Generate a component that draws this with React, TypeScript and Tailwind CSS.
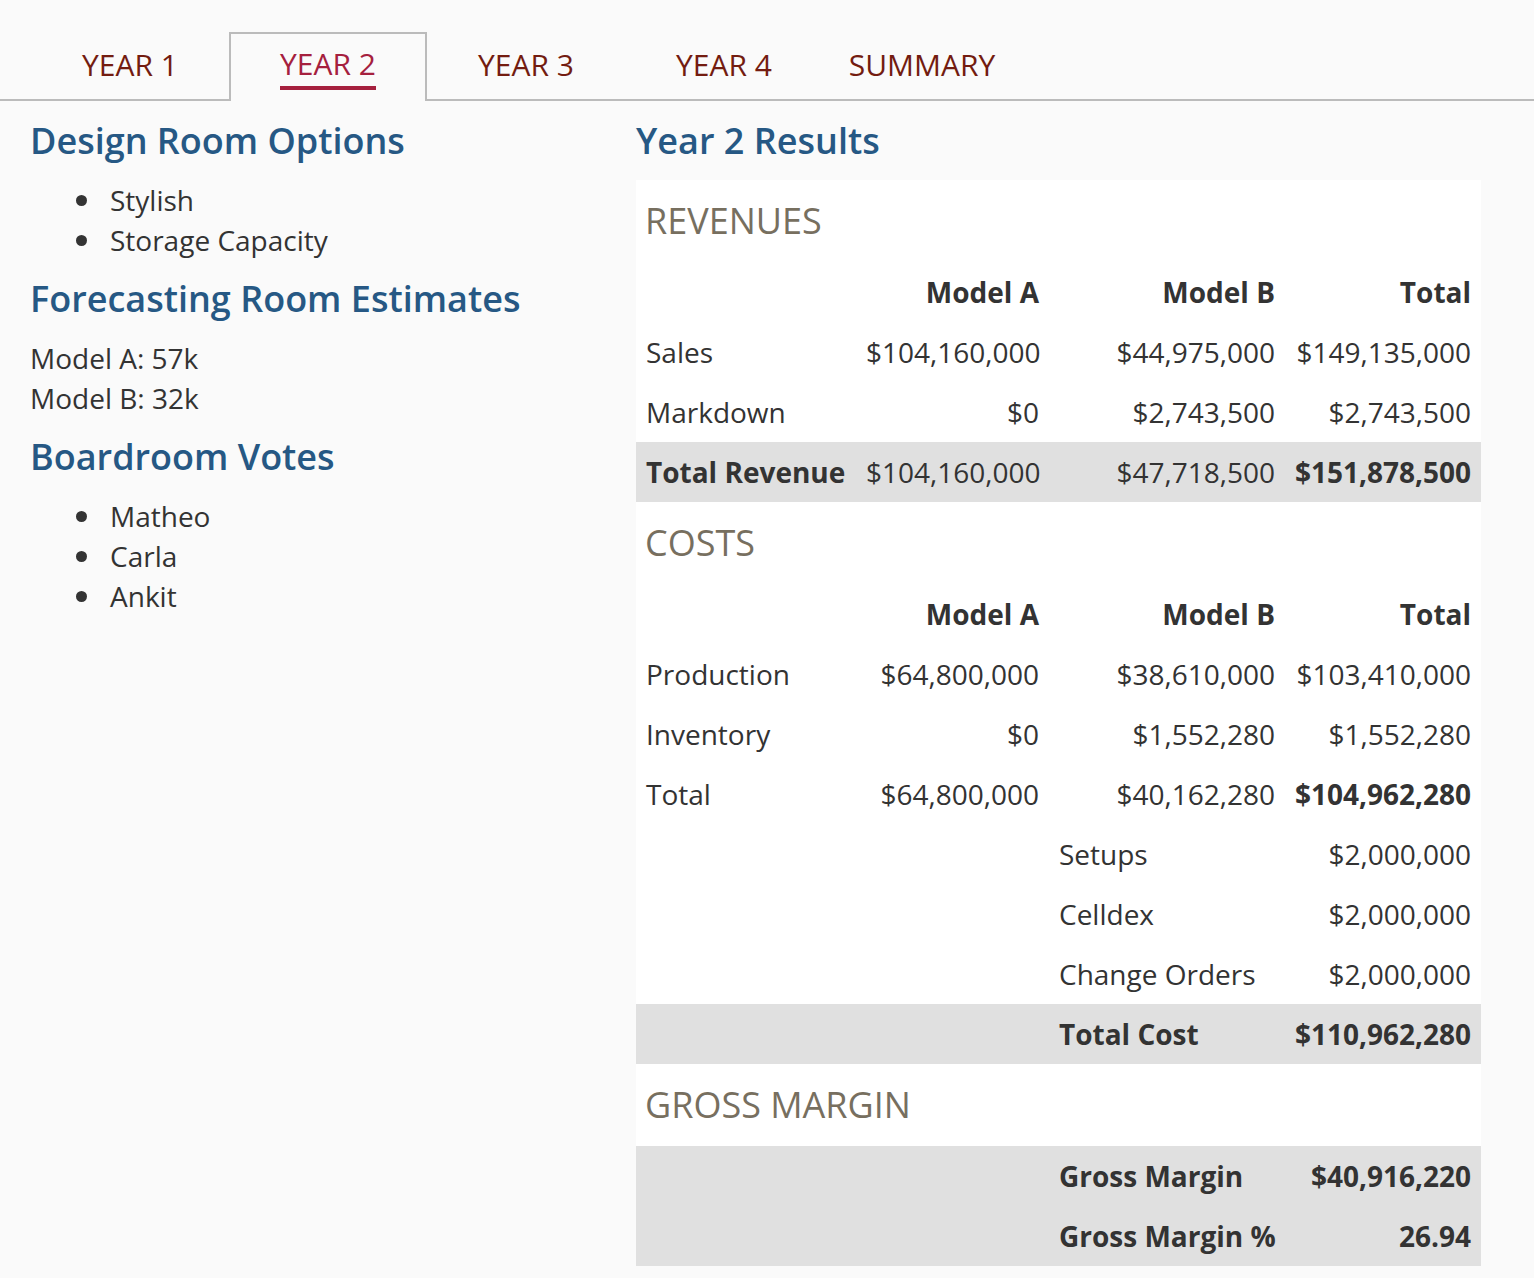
import React from "react";

const tabs = ["YEAR 1", "YEAR 2", "YEAR 3", "YEAR 4", "SUMMARY"];

type Cell = { t?: string; b?: boolean; left?: boolean };
type Row = { cells: Cell[]; gray?: boolean };

function TRow({ row }: { row: Row }) {
  return (
    <div
      className={`grid grid-cols-[220px_193px_236px_196px] h-[60px] items-center ${
        row.gray ? "bg-[#e0e0e0]" : ""
      }`}
    >
      {row.cells.map((c, i) => (
        <div
          key={i}
          className={`px-[10px] whitespace-nowrap leading-[38px] ${
            i === 0 || c.left ? "text-left" : "text-right"
          } ${c.b ? "font-bold" : "font-normal"}`}
        >
          {c.t ?? ""}
        </div>
      ))}
    </div>
  );
}

function SectionHead({ children }: { children: React.ReactNode }) {
  return (
    <div className="h-[82px] flex items-center px-[9px] text-[36px] leading-[40px] text-[#776f5f]">
      {children}
    </div>
  );
}

function Bullets({ items }: { items: string[] }) {
  return (
    <ul className="mt-[19px]">
      {items.map((it) => (
        <li key={it} className="flex items-center h-[40px]">
          <span className="ml-[46px] mr-[23px] w-[11px] h-[11px] rounded-full bg-[#333333]" />
          <span>{it}</span>
        </li>
      ))}
    </ul>
  );
}

export default function App() {
  const hdr: Row = {
    cells: [{ t: "" }, { t: "Model A", b: true }, { t: "Model B", b: true }, { t: "Total", b: true }],
  };
  const revenue: Row[] = [
    hdr,
    { cells: [{ t: "Sales" }, { t: "$104,160,000" }, { t: "$44,975,000" }, { t: "$149,135,000" }] },
    { cells: [{ t: "Markdown" }, { t: "$0" }, { t: "$2,743,500" }, { t: "$2,743,500" }] },
    {
      gray: true,
      cells: [
        { t: "Total Revenue", b: true },
        { t: "$104,160,000" },
        { t: "$47,718,500" },
        { t: "$151,878,500", b: true },
      ],
    },
  ];
  const costs: Row[] = [
    hdr,
    { cells: [{ t: "Production" }, { t: "$64,800,000" }, { t: "$38,610,000" }, { t: "$103,410,000" }] },
    { cells: [{ t: "Inventory" }, { t: "$0" }, { t: "$1,552,280" }, { t: "$1,552,280" }] },
    { cells: [{ t: "Total" }, { t: "$64,800,000" }, { t: "$40,162,280" }, { t: "$104,962,280", b: true }] },
    { cells: [{ t: "" }, { t: "" }, { t: "Setups", left: true }, { t: "$2,000,000" }] },
    { cells: [{ t: "" }, { t: "" }, { t: "Celldex", left: true }, { t: "$2,000,000" }] },
    { cells: [{ t: "" }, { t: "" }, { t: "Change Orders", left: true }, { t: "$2,000,000" }] },
    {
      gray: true,
      cells: [{ t: "" }, { t: "" }, { t: "Total Cost", left: true, b: true }, { t: "$110,962,280", b: true }],
    },
  ];
  const margin: Row[] = [
    {
      gray: true,
      cells: [{ t: "" }, { t: "" }, { t: "Gross Margin", left: true, b: true }, { t: "$40,916,220", b: true }],
    },
    {
      gray: true,
      cells: [{ t: "" }, { t: "" }, { t: "Gross Margin %", left: true, b: true }, { t: "26.94", b: true }],
    },
  ];

  return (
    <div
      className="min-h-screen bg-[#fafafa] text-[#333333] text-[28px] leading-[40px] pb-[12px]"
      style={{ fontFamily: '"Open Sans", "Noto Sans", sans-serif' }}
    >
      {/* Tabs */}
      <div className="flex items-start pt-[32px] pl-[31px] border-b-2 border-[#bbbbbb]">
        {tabs.map((t, i) => {
          const active = i === 1;
          return (
            <div
              key={t}
              className={`w-[198px] flex items-center justify-center ${
                active
                  ? "h-[69px] -mb-[2px] pb-[3px] border-2 border-b-0 border-[#bbbbbb] bg-[#fafafa] relative"
                  : "h-[67px] pt-[2px]"
              }`}
            >
              <span
                className={`text-[30px] leading-[44px] border-b-4 ${
                  active ? "text-[#a5203e] border-[#a5203e]" : "text-[#731c10] border-transparent"
                }`}
              >
                {t}
              </span>
            </div>
          );
        })}
      </div>

      <div className="flex pl-[30px]">
        {/* Left column */}
        <div className="w-[606px] shrink-0">
          <h2 className="mt-[20px] text-[36px] leading-[40px] font-semibold text-[#265884]">
            Design Room Options
          </h2>
          <Bullets items={["Stylish", "Storage Capacity"]} />
          <h2 className="mt-[19px] text-[36px] leading-[40px] font-semibold text-[#265884]">
            Forecasting Room Estimates
          </h2>
          <div className="mt-[19px]">
            <div>Model A: 57k</div>
            <div>Model B: 32k</div>
          </div>
          <h2 className="mt-[19px] text-[36px] leading-[40px] font-semibold text-[#265884]">
            Boardroom Votes
          </h2>
          <Bullets items={["Matheo", "Carla", "Ankit"]} />
        </div>

        {/* Right column */}
        <div className="w-[845px] shrink-0">
          <h2 className="mt-[20px] text-[36px] leading-[40px] font-semibold text-[#265884]">
            Year 2 Results
          </h2>
          <div className="mt-[19px] bg-white">
            <SectionHead>REVENUES</SectionHead>
            {revenue.map((r, i) => (
              <TRow key={i} row={r} />
            ))}
            <SectionHead>COSTS</SectionHead>
            {costs.map((r, i) => (
              <TRow key={i} row={r} />
            ))}
            <SectionHead>GROSS MARGIN</SectionHead>
            {margin.map((r, i) => (
              <TRow key={i} row={r} />
            ))}
          </div>
        </div>
      </div>
    </div>
  );
}
